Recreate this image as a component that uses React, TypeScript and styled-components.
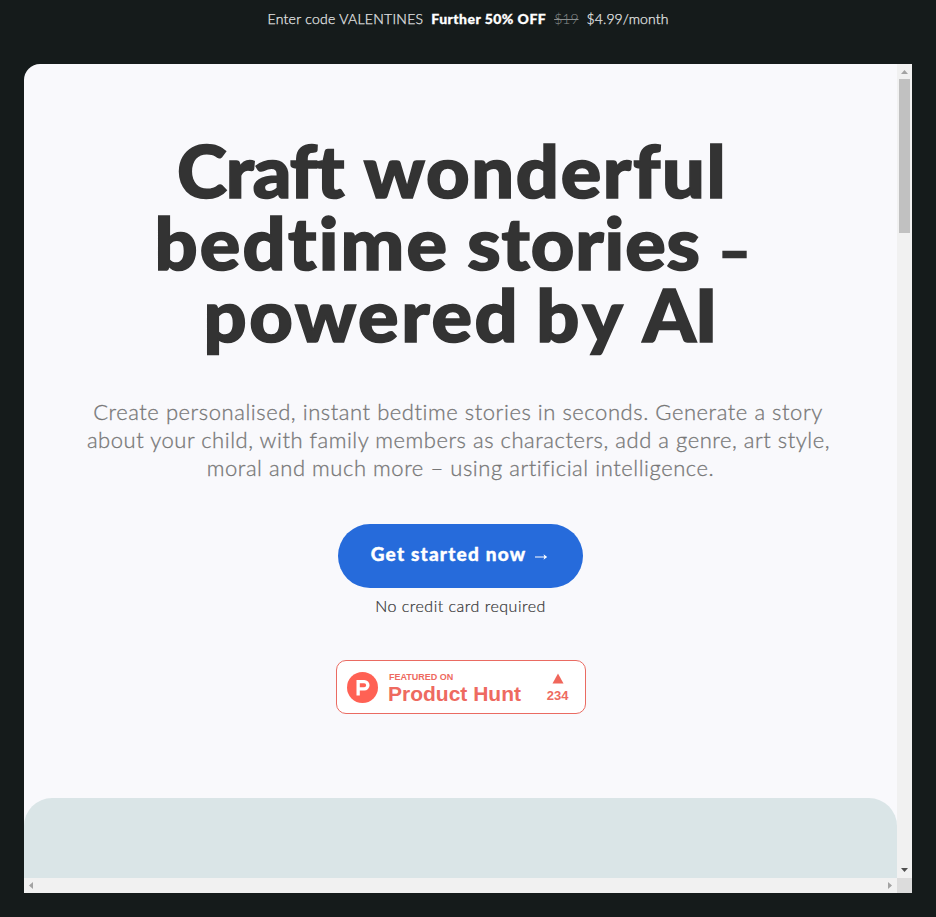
import React from "react";
import styled, { createGlobalStyle } from "styled-components";

const GlobalStyle = createGlobalStyle`
  *, *::before, *::after { box-sizing: border-box; }
  body {
    margin: 0;
    background: #151b1b;
    font-family: Lato, "Open Sans", sans-serif;
  }
`;

const Page = styled.div`
  height: 917px;
  padding: 0 24px 24px;
  display: flex;
  flex-direction: column;
  overflow: hidden;
  background: #151b1b;
`;

const PromoBar = styled.div`
  height: 64px;
  padding: 9px 0 0;
  display: flex;
  justify-content: center;
  gap: 8px;
  font-size: 14px;
  line-height: 20px;
  color: #e6e8e8;
  white-space: nowrap;
`;

const PromoText = styled.span<{ $tracking?: number }>`
  font-weight: 300;
  letter-spacing: ${(p) => p.$tracking ?? 0}px;
  -webkit-text-stroke: 0.25px currentColor;
`;

const PromoStrong = styled.strong`
  font-weight: 900;
  letter-spacing: 0.45px;
  color: #fff;
  -webkit-text-stroke: 0.3px currentColor;
`;

const OldPrice = styled.s`
  font-weight: 300;
  color: #8b8f8f;
`;

const Frame = styled.div`
  width: 888px;
  height: 829px;
  display: grid;
  grid-template-columns: 873px 15px;
  grid-template-rows: 814px 15px;
  border-top-left-radius: 16px;
  overflow: hidden;
  background: #f9f9fc;
`;

const Viewport = styled.main`
  display: flex;
  flex-direction: column;
  align-items: center;
  overflow: hidden;

  & > * {
    flex-shrink: 0;
  }
`;

const Title = styled.h1`
  margin: 70px 0 0;
  font-size: 72px;
  line-height: 72px;
  font-weight: 900;
  color: #333;
  text-align: center;
  transform: scaleX(1.05);
  -webkit-text-stroke: 1.6px #333;
`;

const Line = styled.span<{ $tracking?: number; $trail?: number; $gap?: number }>`
  display: block;
  white-space: nowrap;
  letter-spacing: ${(p) => p.$tracking ?? 0}px;
  word-spacing: ${(p) => p.$gap ?? 0}px;
  padding-right: ${(p) => p.$trail ?? 0}px;
`;

const Word = styled.span<{ $tracking: number }>`
  letter-spacing: ${(p) => p.$tracking}px;
`;

const Dash = styled.span`
  font-size: 51px;
  line-height: 1;
  letter-spacing: 0;
  -webkit-text-stroke-width: 2.4px;
`;

const Lead = styled.p`
  margin: 48px 0 0;
  font-size: 22px;
  line-height: 28px;
  font-weight: 300;
  color: #777;
  text-align: center;
  -webkit-text-stroke: 0.3px #777;
`;

const CallToAction = styled.button`
  width: 245px;
  height: 64px;
  margin: 42px 0 0;
  padding: 0 2px 5px 0;
  display: flex;
  align-items: center;
  justify-content: center;
  gap: 8px;
  border: 0;
  border-radius: 32px;
  background: #266bdb;
  color: #fff;
  font-family: inherit;
  font-size: 19px;
  font-weight: 900;
  letter-spacing: 1.2px;
  white-space: nowrap;
  -webkit-text-stroke: 0.4px #fff;
`;

const Arrow = styled.svg`
  width: 14px;
  height: 8px;
  margin-top: 7px;
`;

const Note = styled.p`
  margin: 7px 0 0;
  font-size: 16px;
  line-height: 22px;
  font-weight: 300;
  letter-spacing: 0.5px;
  color: #333;
  -webkit-text-stroke: 0.2px #333;
`;

const Badge = styled.div`
  width: 250px;
  height: 54px;
  margin-top: 43px;
  padding: 0 16px 0 10px;
  display: flex;
  align-items: center;
  border: 1px solid #ea6b62;
  border-radius: 10px;
  background: #fff;
  color: #ee6a60;
  font-family: "Liberation Sans", Arial, sans-serif;
  font-weight: 700;
`;

const BadgeLogo = styled.svg`
  width: 31px;
  height: 31px;
  flex: none;
`;

const BadgeText = styled.div`
  margin-left: 10.5px;
  padding-top: 1px;
  display: flex;
  flex-direction: column;
  white-space: nowrap;
`;

const BadgeCaption = styled.span`
  padding-left: 1px;
  font-size: 9px;
  line-height: 11px;
`;

const BadgeName = styled.span`
  font-size: 21px;
  line-height: 21px;
`;

const Votes = styled.div`
  margin-left: auto;
  padding-top: 1px;
  display: flex;
  flex-direction: column;
  align-items: center;
  gap: 4px;
  font-size: 13px;
  line-height: 15px;
`;

const VoteArrow = styled.svg`
  width: 12px;
  height: 11px;
`;

const NextSection = styled.section`
  width: 100%;
  height: 80px;
  margin-top: 84px;
  border-radius: 28px 28px 0 0;
  background: #dae5e7;
`;

const VerticalScrollbar = styled.div`
  padding: 0 2px;
  display: flex;
  flex-direction: column;
  align-items: center;
  background: #f1f1f1;
`;

const HorizontalScrollbar = styled.div`
  display: flex;
  justify-content: space-between;
  background: #f1f1f1;
`;

const Thumb = styled.div`
  width: 11px;
  height: 154px;
  margin-bottom: auto;
  background: #c1c1c1;
`;

const ScrollCorner = styled.div`
  background: #dcdcdc;
`;

const ScrollArrow = styled.svg<{ $strong?: boolean }>`
  width: 15px;
  height: 15px;
  flex: none;
  fill: ${(p) => (p.$strong ? "#505050" : "#a3a3a3")};
`;

export default function App() {
  return (
    <>
      <GlobalStyle />
      <Page>
        <PromoBar>
          <PromoText $tracking={0.28}>Enter code VALENTINES</PromoText>
          <PromoStrong>Further 50% OFF</PromoStrong>
          <OldPrice>$19</OldPrice>
          <PromoText $tracking={0.12}>$4.99/month</PromoText>
        </PromoBar>
        <Frame>
          <Viewport>
            <Title>
              <Line $trail={15} $gap={2}>
                <Word $tracking={-0.95}>Craft</Word> <Word $tracking={1.6}>wonderful</Word>
              </Line>
              <Line $trail={15}>
                <Word $tracking={2.1}>bedtime</Word> <Word $tracking={0.86}>stories</Word> <Dash>–</Dash>
              </Line>
              <Line $gap={-2}>
                <Word $tracking={2.5}>powered</Word> <Word $tracking={4}>by</Word>{" "}
                <Word $tracking={-1}>AI</Word>
              </Line>
            </Title>
            <Lead>
              <Line $tracking={0.55} $trail={5}>
                Create personalised, instant bedtime stories in seconds. Generate a story
              </Line>
              <Line $tracking={0.53} $trail={4}>
                about your child, with family members as characters, add a genre, art style,
              </Line>
              <Line $tracking={0.55}>moral and much more – using artificial intelligence.</Line>
            </Lead>
            <CallToAction>
              Get started now
              <Arrow viewBox="0 0 14 8" aria-hidden="true">
                <path d="M1 4H12" stroke="#fff" strokeWidth="1" fill="none" />
                <path d="M9.5 1.2L13.2 4L9.5 6.8L10.4 4Z" fill="#fff" />
              </Arrow>
            </CallToAction>
            <Note>No credit card required</Note>
            <Badge>
              <BadgeLogo viewBox="0 0 31 31" aria-hidden="true">
                <circle cx="15.5" cy="15.5" r="15.5" fill="#ff6154" />
                <path
                  fill="#fff"
                  fillRule="evenodd"
                  d="M9.5 8H17.3A5.2 5.2 0 0 1 17.3 18.5H12.8V23.5H9.5ZM12.8 11.2V15.3H17.1A2.05 2.05 0 0 0 17.1 11.2Z"
                />
              </BadgeLogo>
              <BadgeText>
                <BadgeCaption>FEATURED ON</BadgeCaption>
                <BadgeName>Product Hunt</BadgeName>
              </BadgeText>
              <Votes>
                <VoteArrow viewBox="0 0 12 11" aria-hidden="true">
                  <path d="M6 0.5L11.5 10.5H0.5Z" fill="#f0665b" />
                </VoteArrow>
                234
              </Votes>
            </Badge>
            <NextSection />
          </Viewport>
          <VerticalScrollbar>
            <ScrollArrow viewBox="0 0 15 15">
              <path d="M4 10H11L7.5 6Z" />
            </ScrollArrow>
            <Thumb />
            <ScrollArrow $strong viewBox="0 0 15 15">
              <path d="M4 5H11L7.5 9Z" />
            </ScrollArrow>
          </VerticalScrollbar>
          <HorizontalScrollbar>
            <ScrollArrow viewBox="0 0 15 15">
              <path d="M9 4V11L5 7.5Z" />
            </ScrollArrow>
            <ScrollArrow viewBox="0 0 15 15">
              <path d="M6 4V11L10 7.5Z" />
            </ScrollArrow>
          </HorizontalScrollbar>
          <ScrollCorner />
        </Frame>
      </Page>
    </>
  );
}
